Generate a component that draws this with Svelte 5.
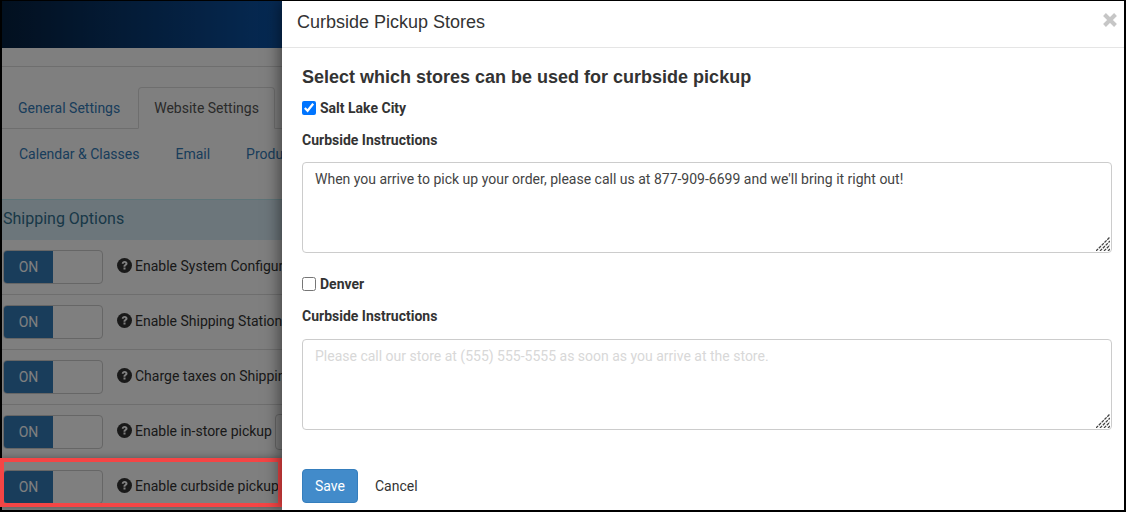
<script>
  const rows = [
    { label: "Enable System Configurator Rates" },
    { label: "Enable Shipping Station Integration" },
    { label: "Charge taxes on Shipping Charges" },
    { label: "Enable in-store pickup", extra: true },
    { label: "Enable curbside pickup" }
  ];
  const subnav = ["Calendar & Classes", "Email", "Products"];
  const stores = [
    {
      name: "Salt Lake City",
      checked: true,
      value: "When you arrive to pick up your order, please call us at 877-909-6699 and we'll bring it right out!"
    },
    { name: "Denver", checked: false, value: "" }
  ];
  const hint = "Please call our store at (555) 555-5555 as soon as you arrive at the store.";
</script>

<div class="screen">
  <div class="page">
    <header class="topbar"></header>
    <div class="crumbs"></div>
    <nav class="tabs">
      <span class="tab">General Settings</span>
      <span class="tab active">Website Settings</span>
    </nav>
    <nav class="subnav">
      {#each subnav as item}
        <span>{item}</span>
      {/each}
    </nav>
    <h3 class="band">Shipping Options</h3>
    {#each rows as row}
      <div class="row">
        <div class="toggle"><span class="on">ON</span><span class="off"></span></div>
        <svg class="help" viewBox="0 0 24 24" width="15" height="15">
          <circle cx="12" cy="12" r="12" fill="#333" />
          <path d="M7.600 9.200c.2-2.700 2-4.300 4.700-4.300 2.600 0 4.500 1.500 4.500 3.800 0 1.600-.9 2.500-2.100 3.300-.9.600-1.200 1-1.200 1.900h-3.100c0-1.800.5-2.700 1.700-3.500.9-.6 1.400-1 1.400-1.600 0-.7-.6-1.200-1.400-1.200-.9 0-1.400.5-1.500 1.600z M10.400 15.300h3.200v3.200h-3.200z" fill="#fff" />
        </svg>
        <span class="label">{row.label}</span>
        {#if row.extra}<span class="select"></span>{/if}
      </div>
    {/each}
  </div>
  <div class="scrim"></div>
  <div class="mark"></div>

  <section class="panel">
    <div class="panel-head">
      <h2>Curbside Pickup Stores</h2>
      <svg class="close" viewBox="0 0 16 16" width="16" height="16">
        <path d="M2.500 2.500l11 11M13.500 2.500l-11 11" stroke="#c6c6c6" stroke-width="4" />
      </svg>
    </div>
    <div class="panel-body">
      <h3>Select which stores can be used for curbside pickup</h3>
      {#each stores as store}
        <div class="store">
          <label class="check">
            <input type="checkbox" checked={store.checked} />
            <span>{store.name}</span>
          </label>
          <div class="field-label">Curbside Instructions</div>
          <div class="area">
            <textarea placeholder={hint} value={store.value}></textarea>
            <svg class="grip" viewBox="0 0 14 14" width="14" height="14">
              <path d="M0 14L14 0M4 14L14 4M8 14L14 8M12 14L14 12" stroke="#444" stroke-width="1.300" stroke-dasharray="3 1" />
            </svg>
          </div>
        </div>
      {/each}
      <div class="actions">
        <button class="save">Save</button>
        <button class="cancel">Cancel</button>
      </div>
    </div>
  </section>
</div>

<style>
  :global(body) {
    margin: 0;
    background: #000;
  }
  .screen {
    position: relative;
    width: 1126px;
    height: 512px;
    box-sizing: border-box;
    border: solid #000;
    border-width: 1px 2px 2px 2px;
    font-family: Roboto, "Liberation Sans", sans-serif;
    font-size: 14px;
    color: #333;
    background: #fff;
  }
  .page {
    width: 280px;
    height: 100%;
    overflow: hidden;
    white-space: nowrap;
  }
  .topbar {
    height: 47px;
    background: linear-gradient(90deg, #05203f 0, #0c54a8 280px);
  }
  .crumbs {
    height: 18px;
    border-bottom: 1px solid #ddd;
  }
  .tabs {
    display: flex;
    height: 41px;
    margin-top: 20px;
    border-bottom: 1px solid #ddd;
  }
  .tab {
    flex: none;
    box-sizing: border-box;
    height: 42px;
    padding: 12px 15px 0 15px;
    margin-right: 2px;
    border: 1px solid transparent;
    border-radius: 4px 4px 0 0;
    color: #337ab7;
  }
  .tab.active {
    color: #555;
    background: #fff;
    border-color: #ddd #ddd #fff;
  }
  .subnav {
    display: flex;
    gap: 36px;
    height: 70px;
    padding: 17px 0 0 17px;
    box-sizing: border-box;
    color: #337ab7;
  }
  .band {
    box-sizing: border-box;
    height: 41px;
    margin: 0;
    padding: 9px 0 0 1px;
    border-top: 1px solid #bce8f1;
    background: #d9edf7;
    color: #31708f;
    font-size: 16px;
    line-height: 20px;
    font-weight: 400;
  }
  .row {
    display: flex;
    align-items: center;
    box-sizing: border-box;
    height: 55px;
    padding-left: 1px;
    border-bottom: 1px solid #ddd;
  }
  .toggle {
    flex: none;
    display: flex;
    box-sizing: border-box;
    width: 100px;
    height: 34px;
    margin-right: 14px;
    border: 1px solid #ccc;
    border-radius: 4px;
    overflow: hidden;
  }
  .on {
    width: 49px;
    background: #337ab7;
    color: #fff;
    text-align: center;
    line-height: 32px;
  }
  .off {
    flex: 1;
  }
  .help {
    flex: none;
    margin-right: 3px;
    margin-top: -3px;
  }
  .label {
    flex: none;
    margin-top: -3px;
  }
  .select {
    flex: none;
    width: 60px;
    height: 34px;
    margin-left: 3px;
    border: 1px solid #ccc;
    border-radius: 4px;
  }
  .scrim {
    position: absolute;
    inset: 0;
    background: rgba(0, 0, 0, 0.5);
  }
  .mark {
    position: absolute;
    left: -2px;
    top: 457px;
    width: 282px;
    height: 49px;
    box-sizing: border-box;
    border: 4px solid #f54545;
    box-shadow: 0 0 7px rgba(0, 0, 0, 0.35);
  }
  .panel {
    position: absolute;
    left: 280px;
    top: 0;
    bottom: 0;
    right: 0;
    background: #fff;
    box-shadow: -2px 0 15px rgba(0, 0, 0, 0.5);
  }
  .panel-head {
    display: flex;
    align-items: center;
    justify-content: space-between;
    box-sizing: border-box;
    height: 47px;
    padding: 0 6px 3px 15px;
    border-bottom: 1px solid #e5e5e5;
  }
  .panel-head h2 {
    margin: 0;
    font-family: "Liberation Sans", Arial, sans-serif;
    font-size: 18px;
    font-weight: 400;
    color: #333;
  }
  .close {
    margin-top: -5px;
  }
  .panel-body {
    padding: 19px 12px 0 20px;
  }
  .panel-body h3 {
    margin: 0 0 11px;
    font-family: "Liberation Sans", Arial, sans-serif;
    font-size: 18px;
    line-height: 20px;
    font-weight: 700;
    color: #333;
  }
  .store {
    margin-bottom: 21px;
  }
  .store + .store .area {
    margin-top: 13px;
  }
  .check {
    display: flex;
    align-items: center;
    height: 20px;
    font-weight: 700;
  }
  .check input {
    width: 14px;
    height: 14px;
    margin: 0 4px 0 0;
  }
  .field-label {
    margin-top: 12px;
    font-weight: 700;
    line-height: 20px;
  }
  .area {
    position: relative;
    margin-top: 12px;
  }
  textarea {
    display: block;
    box-sizing: border-box;
    width: 100%;
    height: 91px;
    padding: 6px 12px;
    border: 1px solid #ccc;
    border-radius: 4px;
    font: inherit;
    line-height: 20px;
    color: #444;
    outline: none;
  }
  textarea::placeholder {
    color: #d8d8d8;
    opacity: 1;
  }
  .grip {
    position: absolute;
    right: 2px;
    bottom: 2px;
    background: #fff;
  }
  .actions {
    display: flex;
    align-items: center;
    gap: 17px;
    margin-top: 39px;
  }
  .save {
    width: 56px;
    height: 34px;
    border: 1px solid #357ebd;
    border-radius: 4px;
    background: #428bca;
    color: #fff;
    font: inherit;
  }
  .cancel {
    padding: 0;
    border: 0;
    background: none;
    color: #333;
    font: inherit;
  }
</style>
